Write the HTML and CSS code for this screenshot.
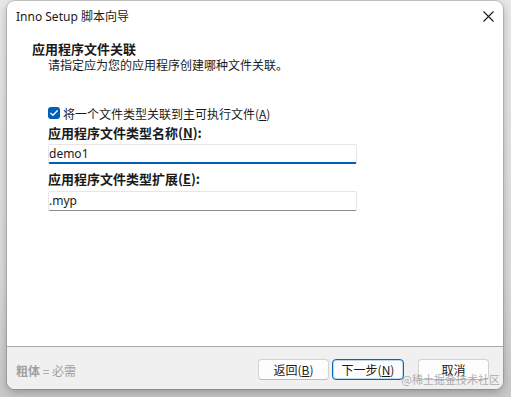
FILE: index.html
```html
<!DOCTYPE html>
<html lang="zh-CN">
<head>
<meta charset="utf-8">
<title>Inno Setup 脚本向导</title>
<link rel="stylesheet" href="styles.css">
</head>
<body>
<div class="window">
  <div class="titlebar">
    <span class="title">Inno Setup 脚本向导</span>
    <span class="close" aria-label="关闭">
      <svg width="11" height="11" viewBox="0 0 11 11"><path d="M0.5 0.5 L10.5 10.5 M10.5 0.5 L0.5 10.5" stroke="#1a1a1a" stroke-width="1.1" fill="none"/></svg>
    </span>
  </div>
  <div class="content">
    <div class="heading">应用程序文件关联</div>
    <div class="subtitle">请指定应为您的应用程序创建哪种文件关联。</div>
    <div class="form">
      <label class="check-row">
        <span class="checkbox">
          <svg width="12" height="12" viewBox="0 0 12 12"><path d="M2.8 6.2 L5 8.3 L9.3 3.8" stroke="#fff" stroke-width="1.3" fill="none" stroke-linecap="round" stroke-linejoin="round"/></svg>
        </span>
        <span>将一个文件类型关联到主可执行文件(<u>A</u>)</span>
      </label>
      <div class="field-label first">应用程序文件类型名称(<u>N</u>):</div>
      <div class="input focused">demo1</div>
      <div class="field-label second">应用程序文件类型扩展(<u>E</u>):</div>
      <div class="input">.myp</div>
    </div>
  </div>
  <div class="footer">
    <div class="legend"><b>粗体</b> = 必需</div>
    <div class="buttons">
      <button class="btn">返回(<u>B</u>)</button>
      <button class="btn default">下一步(<u>N</u>)</button>
      <button class="btn cancel">取消</button>
    </div>
    <div class="watermark">@稀土掘金技术社区</div>
  </div>
</div>
</body>
</html>
```
FILE: styles.css
```css
html, body {
  margin: 0;
  padding: 0;
}
body {
  width: 511px;
  height: 397px;
  overflow: hidden;
  background: linear-gradient(180deg, #e8e8e8 0%, #dadada 70%, #c8c8c8 100%);
  font-family: "Noto Sans", "Noto Sans CJK SC", sans-serif;
  font-size: 12px;
  color: #1a1a1a;
}
.window {
  margin-left: 7px;
  margin-top: 1px;
  width: 496px;
  height: 388px;
  background: #ffffff;
  border-radius: 8px;
  box-shadow: 0 3px 10px rgba(0,0,0,0.28), 0 0 0 1px rgba(0,0,0,0.12);
  display: flex;
  flex-direction: column;
  overflow: hidden;
  position: relative;
}
.titlebar {
  height: 31px;
  display: flex;
  align-items: center;
  justify-content: space-between;
  padding-left: 9px;
  padding-right: 9px;
}
.title {
  font-size: 12px;
  line-height: 16px;
}
.close {
  display: flex;
  width: 11px;
  height: 11px;
  margin-top: -1px;
}
.content {
  flex: 1;
  padding-top: 8px;
}
.heading {
  margin-left: 25px;
  font-family: "Noto Sans CJK SC", sans-serif;
  font-weight: 700;
  font-size: 13px;
  line-height: 17px;
}
.subtitle {
  margin-left: 41px;
  font-family: "Noto Sans CJK SC", sans-serif;
  font-size: 12px;
  line-height: 16px;
}
.form {
  margin-left: 41px;
  margin-top: 31px;
  width: 309px;
  display: flex;
  flex-direction: column;
}
.check-row {
  display: flex;
  align-items: center;
  height: 18px;
  font-family: "Noto Sans CJK SC", sans-serif;
  font-size: 12px;
  gap: 3px;
}
.checkbox {
  width: 12px;
  height: 12px;
  border-radius: 3px;
  background: #005fb8;
  display: flex;
}
.field-label {
  font-family: "Noto Sans CJK SC", sans-serif;
  font-weight: 700;
  font-size: 13px;
  line-height: 18px;
}
.field-label.first {
  margin-top: 2px;
}
.field-label.second {
  margin-top: 6px;
}
.input {
  box-sizing: border-box;
  height: 20px;
  margin-top: 2px;
  border: 1px solid #e6e6e6;
  border-bottom: 1px solid #8a8a8a;
  border-radius: 2px;
  padding-left: 0;
  font-family: "Noto Sans", sans-serif;
  font-size: 12px;
  line-height: 18px;
  background: #fff;
}
.input.focused {
  border-bottom: 2px solid #005fb8;
  line-height: 17px;
}
.field-label.second + .input {
  margin-top: 3px;
}
.footer {
  height: 42px;
  border-top: 1px solid #a9a9a9;
  background: #f0f0f0;
  display: flex;
  justify-content: space-between;
  align-items: flex-start;
  padding-left: 9px;
  padding-right: 14px;
  position: relative;
}
.legend {
  margin-top: 16px;
  line-height: 16px;
  font-family: "Noto Sans CJK SC", sans-serif;
  font-size: 12px;
  color: #a0a0a0;
}
.legend b {
  font-weight: 700;
}
.buttons {
  display: flex;
  margin-top: 12px;
}
.btn {
  box-sizing: border-box;
  width: 71px;
  height: 21px;
  padding: 0;
  border: 1px solid #d2d2d2;
  border-bottom-color: #bcbcbc;
  border-radius: 4px;
  background: #fdfdfd;
  font-family: "Noto Sans CJK SC", sans-serif;
  font-size: 12px;
  color: #1a1a1a;
  line-height: 19px;
}
.btn + .btn {
  margin-left: 3px;
}
.btn.default {
  width: 72px;
  border: 1px solid #0067c0;
  box-shadow: inset 0 0 0 1px rgba(0,103,192,0.25);
}
.btn.cancel {
  margin-left: 14px;
}
u {
  text-decoration: underline;
  text-underline-offset: 1px;
}
.watermark {
  position: absolute;
  right: 3px;
  top: 26px;
  font-family: "Noto Sans CJK SC", sans-serif;
  font-size: 11px;
  line-height: 13px;
  color: rgba(150,150,150,0.75);
}
```
